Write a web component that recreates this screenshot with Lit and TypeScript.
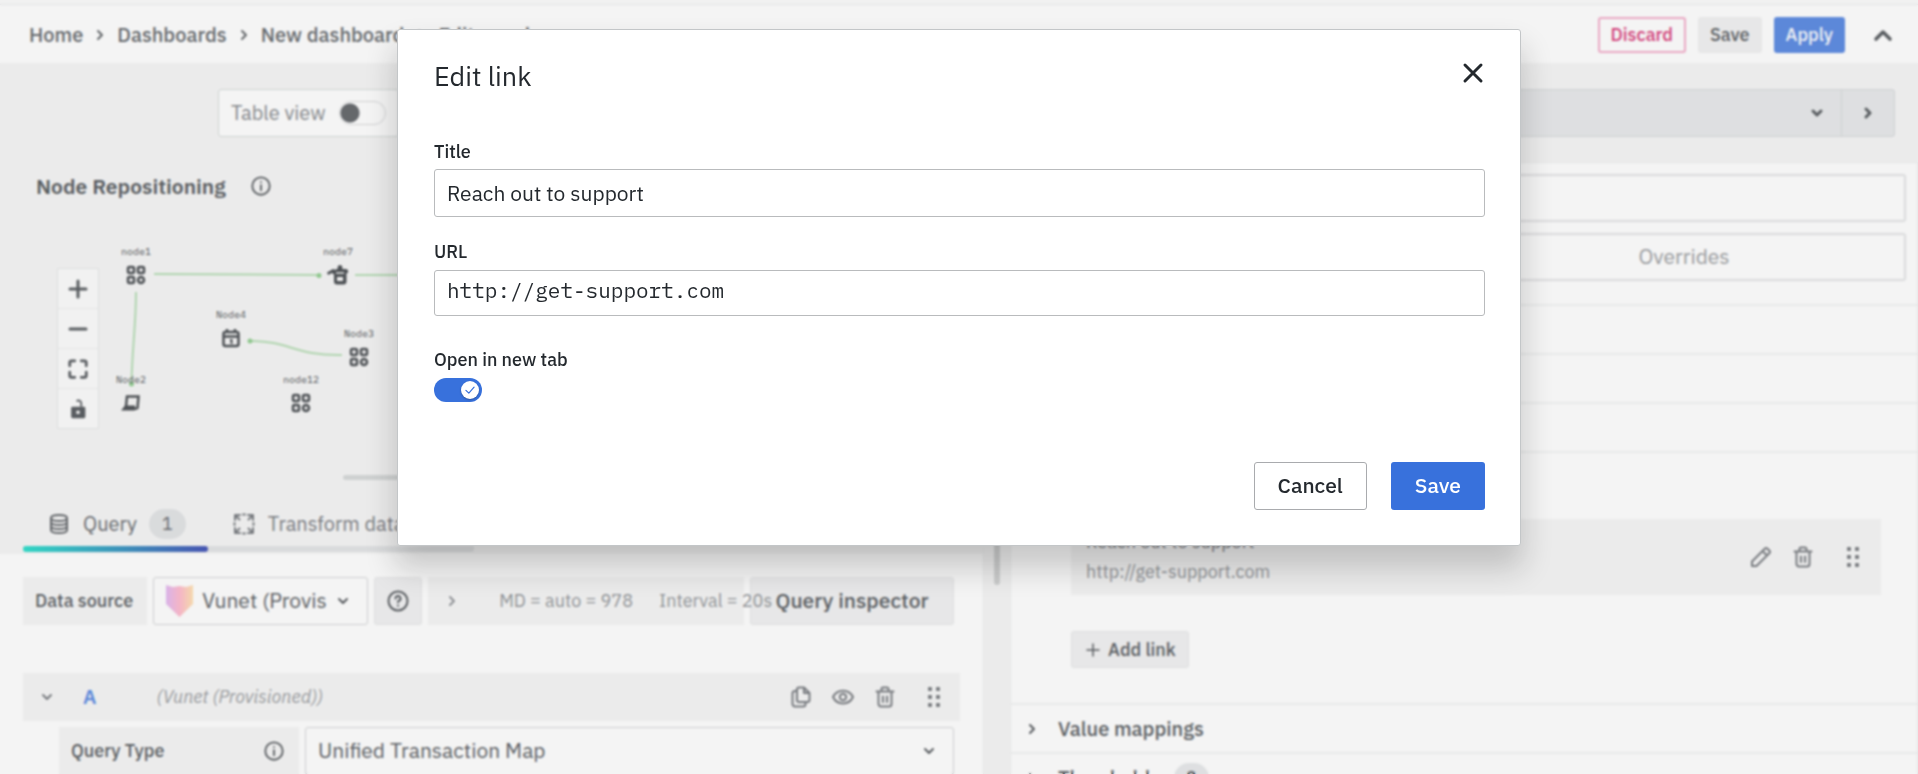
import { LitElement, html, css, svg } from "lit";
import { customElement } from "lit/decorators.js";

const stroke = (d: string, size = 24, width = 2) => html`<svg class="icon" width=${size} height=${size} viewBox="0 0 24 24" fill="none" stroke="currentColor" stroke-width=${width} stroke-linecap="round" stroke-linejoin="round" aria-hidden="true"><path d=${d} /></svg>`;

const ICONS = {
  right: "M10 8l4 4-4 4",
  down: "M8 10l4 4 4-4",
  up: "M6 15.5l6-6 6 6",
  plus: "M12 4v16M4 12h16",
  minus: "M4 12h16",
  close: "M4 4l16 16M20 4L4 20",
  fit: "M3 8.5V5a2 2 0 0 1 2-2h3.5M15.5 3H19a2 2 0 0 1 2 2v3.5M21 15.5V19a2 2 0 0 1-2 2h-3.5M8.5 21H5a2 2 0 0 1-2-2v-3.5",
  info: "M12 2.5a9.5 9.5 0 1 0 0 19a9.5 9.5 0 1 0 0-19M12 11v5.5M12 7.5v.2",
  help: "M12 2.5a9.5 9.5 0 1 0 0 19a9.5 9.5 0 1 0 0-19M9.5 9.5a2.5 2.5 0 1 1 3.6 2.2c-.8.4-1.1.8-1.1 1.6M12 16.5v.2",
  database: "M4 6c0-4 16-4 16 0s-16 4-16 0v12c0 4 16 4 16 0V6M4 10c0 4 16 4 16 0M4 14c0 4 16 4 16 0",
  transform: "M3 8V3h5M3.500 3.500l4 4M16 3h5v5M20.500 3.500l-4 4M21 16v5h-5M20.500 20.500l-4-4M8 21H3v-5M3.500 20.500l4-4M11 2.500h2M2.500 11v2M21.500 11v2M11 21.500h2",
  copy: "M10 2.5h5l5.5 5.5v7a2 2 0 0 1-2 2H10a2 2 0 0 1-2-2V4.5a2 2 0 0 1 2-2M15 2.5v5.5h5.5M8 6H6a2.5 2.5 0 0 0-2.5 2.5v10.500a2.5 2.5 0 0 0 2.5 2.5h8a2.5 2.5 0 0 0 2.5-2.5V17",
  eye: "M2 12C6 3.5 18 3.5 22 12C18 20.5 6 20.5 2 12M12 8.8a3.2 3.2 0 1 0 0 6.4a3.2 3.2 0 1 0 0-6.4",
  trash: "M3.5 6.5h17M8.5 6V4a1.5 1.5 0 0 1 1.5-1.5h4A1.5 1.5 0 0 1 15.5 4v2M5.5 7v12a2.5 2.5 0 0 0 2.5 2.5h8a2.5 2.5 0 0 0 2.5-2.5V7M10 11.5v5.5M14 11.5v5.5",
  pen: "M3 21v-4.5L16 3.5a1.5 1.5 0 0 1 2.2 0l2.3 2.3a1.5 1.5 0 0 1 0 2.2L7.5 21H3M13.5 6l4.5 4.5",
  check: "M5 12.5l5 5 9-10.5",
};

const grip = html`<svg class="icon" width="24" height="24" viewBox="0 0 24 24" fill="currentColor" aria-hidden="true">
  ${[2, 10, 18].map((y) => svg`<rect x="6" y=${y} width="4" height="4" rx="1" /><rect x="14" y=${y} width="4" height="4" rx="1" />`)}</svg>`;

const lock = html`<svg class="icon" width="22" height="22" viewBox="0 0 24 24" aria-hidden="true">
  <path fill="currentColor" fill-rule="evenodd" d="M6 9.5H18.5a1.5 1.5 0 0 1 1.5 1.5v9.5A1.5 1.5 0 0 1 18.5 22H6A1.5 1.5 0 0 1 4.5 20.5V11a1.5 1.5 0 0 1 1.5-1.5M12 13.5a2 2 0 1 0 .01 0z" />
  <path fill="none" stroke="currentColor" stroke-width="2" d="M15.5 9.5V5.5a3 3 0 0 0-5-2" /></svg>`;

const shield = html`<svg class="icon" width="27" height="32" viewBox="0 0 27 32" aria-hidden="true">
  <defs><linearGradient id="vu" x1="0" y1="0" x2="1" y2="0"><stop offset="0" stop-color="#dcaaf0" /><stop offset=".5" stop-color="#ffacc4" /><stop offset="1" stop-color="#ffdba0" /></linearGradient></defs>
  <path fill="url(#vu)" d="M0 0l7 2 6.5-1 6.5 1 7-2v19L13.5 32L0 19z" /></svg>`;

const NODE_GLYPHS: Record<string, unknown> = {
  apps: svg`<g fill="none" stroke="#24292e" stroke-width="2.5"><rect x="-8" y="-8" width="6" height="6" rx="1.5" /><rect x="2" y="-8" width="6" height="6" rx="1.5" /><rect x="-8" y="2" width="6" height="6" rx="1.5" /><circle cx="5" cy="5" r="3" /></g>`,
  calendar: svg`<g fill="none" stroke="#24292e" stroke-width="2.5"><rect x="-7.5" y="-6" width="15" height="14" rx="2" /><path d="M-7.5 -1.5H7.5M-4 -9v4M4 -9v4" /><path stroke-width="2" d="M-1 2h1.5v4" /></g>`,
  bucket: svg`<path fill="#24292e" d="M-11 -2.5l6-3.5 3 1v-1h2a2.5 2.5 0 1 1 4 0h4l2 1v3h-1.500v8.500a3 3 0 0 1-3 3H-1a3 3 0 0 1-3-3v-7l-2-1.5-4 2z" /><path stroke="#f4f4f4" stroke-width="1.5" fill="none" d="M-2 -2H6" /><rect x="-1" y="2" width="6" height="4" fill="#f4f4f4" />`,
  laptop: svg`<path fill="none" stroke="#24292e" stroke-width="2.5" d="M-5 3.5L-4 -6.5H7.5L6.5 5" /><path fill="#24292e" d="M-10 7.500l4-5H4v2h3.500V6L3 7.500z" />`,
};

const NODES = [
  { name: "node1", x: 136, y: 212, glyph: "apps" },
  { name: "node7", x: 338, y: 212, glyph: "bucket" },
  { name: "Node4", x: 231, y: 275, glyph: "calendar" },
  { name: "Node3", x: 359, y: 294, glyph: "apps" },
  { name: "Node2", x: 131, y: 340, glyph: "laptop" },
  { name: "node12", x: 301, y: 340, glyph: "apps" },
];

const base = css`
  * { box-sizing: border-box; }
  button, input, select { font: inherit; color: inherit; margin: 0; }
  button { cursor: pointer; }
  .icon { display: block; flex: none; }
  .bare { display: flex; padding: 0; border: 0; background: none; }
  .btn {
    display: inline-flex; align-items: center; justify-content: center; gap: 6px;
    border: 1px solid transparent; border-radius: 3px; font-weight: 500; white-space: nowrap;
  }
  .primary { background: #3871dc; color: #fff; }
`;

@customElement("top-bar")
export class TopBar extends LitElement {
  static styles = [base, css`
    :host { display: flex; flex: none; align-items: center; justify-content: space-between; height: 64px; padding: 6px 21px 0 29px; background: #fff; border-bottom: 1px solid #f4f4f4; box-shadow: inset 0 4px #fbfbfb, inset 0 5px #e9eaeb; }
    nav { display: flex; align-items: center; gap: 5px; font-size: 20px; font-weight: 500; color: #43484d; }
    a { color: inherit; text-decoration: none; }
    .actions { display: flex; align-items: center; gap: 12px; font-size: 18px; }
    .btn { height: 36px; padding: 0 11px; }
    .danger { background: #fff; color: #d10e5c; border: 2px solid #f19cbf; }
    .grey { background: #eeeeef; }
    .fold { margin-left: 12px; }
  `];
  render() {
    return html`
      <nav aria-label="Breadcrumb">
        <a href="#home">Home</a>${stroke(ICONS.right)}
        <a href="#dashboards">Dashboards</a>${stroke(ICONS.right)}
        <a href="#new">New dashboard</a>${stroke(ICONS.right)}
        <span>Edit panel</span>
      </nav>
      <div class="actions">
        <button class="btn danger">Discard</button>
        <button class="btn grey">Save</button>
        <button class="btn primary">Apply</button>
        <button class="bare fold" aria-label="Collapse">${stroke(ICONS.up, 28, 3)}</button>
      </div>`;
  }
}

@customElement("node-panel")
export class NodePanel extends LitElement {
  static styles = [base, css`
    :host { display: block; flex: none; position: relative; height: 314px; }
    .graph { position: absolute; inset: 0; width: 100%; height: 100%; font: 10px "IBM Plex Mono", "Liberation Mono", monospace; fill: #24292e; }
    header { display: flex; align-items: center; gap: 24px; padding: 12px 13px; }
    h2 { margin: 0; font-size: 21px; line-height: 26px; font-weight: 600; }
    .zoom { position: absolute; left: 34px; top: 107px; width: 42px; display: grid; border: 1px solid #e0e2e2; background: #e9eaea; gap: 1px; }
    .zoom button { display: grid; place-items: center; height: 39px; padding: 0; border: 0; background: #fcfcfc; }
  `];
  render() {
    return html`
      <header><h2>Node Repositioning</h2>${stroke(ICONS.info, 22)}</header>
      <svg class="graph" aria-label="Node map">
        <g transform="translate(-23 -98)">
        <g transform="translate(0 37)" fill="none" stroke="#a6d6a4" stroke-width="2">
          <path d="M154 174L318 175M355 175H560M136 192C136 225 132 250 131.5 284M342 255C295 256 290 241 250 241" />
          <g fill="#7cc47a" stroke="none"><circle cx="319" cy="175.5" r="2.5" /><circle cx="131.5" cy="284" r="2.5" /><circle cx="250" cy="241" r="2.5" /></g>
        </g>
        ${NODES.map((n) => svg`<g transform="translate(${n.x} ${n.y})"><text y="-20" text-anchor="middle">${n.name}</text>${NODE_GLYPHS[n.glyph]}</g>`)}
        </g>
      </svg>
      <div class="zoom">
        <button aria-label="Zoom in">${stroke(ICONS.plus, 24, 3)}</button>
        <button aria-label="Zoom out">${stroke(ICONS.minus, 24, 3)}</button>
        <button aria-label="Fit view">${stroke(ICONS.fit, 22, 3)}</button>
        <button aria-label="Unlock">${lock}</button>
      </div>`;
  }
}

@customElement("query-editor")
export class QueryEditor extends LitElement {
  static styles = [base, css`
    :host { display: flex; flex-direction: column; min-height: 0; }
    .tabs { position: relative; display: flex; flex: none; align-items: center; gap: 34px; height: 50px; margin: 0 23px; padding: 0 24px; width: 451px; border-bottom: 6px solid #dcdee0; border-radius: 0 0 3px 3px; color: #5c6066; }
    .tabs::after { content: ""; position: absolute; left: 0; bottom: -6px; width: 185px; height: 6px; border-radius: 3px; background: linear-gradient(90deg, #00d8c0, #1c2fa8); }
    .tab { display: flex; align-items: center; gap: 12px; padding: 0; border: 0; background: none; font-size: 20px; white-space: nowrap; }
    .tab + .tab { margin-left: 12px; }
    .active { color: #43474c; }
    .count { padding: 0 13px; border-radius: 15px; background: #dcdee0; font-size: 18px; line-height: 30px; }
    .body { flex: 1; margin-top: 2px; padding: 23px 23px 0; background: #fff; }
    .row { display: flex; gap: 6px; padding-right: 6px; }
    .label { display: flex; align-items: center; justify-content: space-between; height: 48px; padding: 0 14px 0 12px; background: #f4f4f4; font-size: 18px; font-weight: 500; white-space: nowrap; }
    .source { display: flex; align-items: center; width: 215px; height: 48px; padding: 0 12px; border: 1px solid #cccdd0; border-radius: 3px; background: #fff; }
    select { flex: 1; min-width: 0; height: 46px; padding: 0; border: 0; appearance: none; background: none; font-size: 21px; }
    .logo { margin-right: 9px; }
    .square { width: 48px; height: 48px; padding: 0; background: #eeeeef; border-color: #e3e4e5; }
    .options { display: flex; align-items: center; gap: 26px; flex: 1; min-width: 0; height: 48px; padding-left: 12px; background: #f4f4f4; font-size: 18px; color: #7a7e83; white-space: nowrap; }
    .options span { position: relative; z-index: 1; }
    .options .first { margin-left: 9px; }
    .inspector { width: 204px; height: 48px; font-size: 21px; background: #eeeeef; border-color: #e3e4e5; }
    .head { display: flex; align-items: center; gap: 18px; height: 48px; margin-top: 48px; padding: 0 14px 0 12px; background: #f4f4f4; font-size: 18px; color: #5c6066; }
    .ref { margin-left: 6px; color: #3871dc; font-size: 20px; font-weight: 600; }
    .name { flex: 1; margin-left: 42px; font-style: italic; color: #85888c; }
    .drag { margin-left: 7px; }
    .type { margin: 6px 0 0 36px; }
    .type .label { width: 240px; }
    .type .source { flex: 1; width: auto; }
  `];
  render() {
    return html`
      <div class="tabs">
        <button class="tab active">${stroke(ICONS.database)}<span>Query</span><span class="count">1</span></button>
        <button class="tab">${stroke(ICONS.transform)}<span>Transform data</span></button>
      </div>
      <div class="body">
        <div class="row">
          <label class="label" for="source">Data source</label>
          <div class="source"><span class="logo">${shield}</span><select id="source"><option>Vunet (Provis</option></select>${stroke(ICONS.down)}</div>
          <button class="btn square" aria-label="Help">${stroke(ICONS.help)}</button>
          <div class="options">${stroke(ICONS.right)}<span class="first">MD = auto = 978</span><span>Interval = 20s</span></div>
          <button class="btn inspector">Query inspector</button>
        </div>
        <div class="head">
          <button class="bare" aria-label="Collapse query">${stroke(ICONS.down)}</button>
          <span class="ref">A</span><span class="name">(Vunet (Provisioned))</span>
          <button class="bare" aria-label="Duplicate">${stroke(ICONS.copy)}</button>
          <button class="bare" aria-label="Hide">${stroke(ICONS.eye)}</button>
          <button class="bare" aria-label="Remove">${stroke(ICONS.trash)}</button>
          <button class="bare drag" aria-label="Move">${grip}</button>
        </div>
        <div class="row type">
          <label class="label" for="type">Query Type ${stroke(ICONS.info, 22)}</label>
          <div class="source"><select id="type"><option>Unified Transaction Map</option></select>${stroke(ICONS.down)}</div>
        </div>
      </div>`;
  }
}

@customElement("options-pane")
export class OptionsPane extends LitElement {
  static styles = [base, css`
    :host { display: flex; flex-direction: column; min-height: 0; }
    .viz { display: flex; flex: none; height: 48px; margin: 25px 23px 25px 0; border: 1px solid #ced1d3; border-radius: 3px; background: #e2e4e6; }
    .viz button { display: flex; align-items: center; justify-content: flex-end; padding: 0 12px; border: 0; background: none; }
    .viz .pick { flex: 1; }
    .viz .next { width: 53px; justify-content: center; border-left: 1px solid #ced1d3; }
    .pane { flex: 1; min-height: 0; background: #fff; border: 1px solid #eceded; border-bottom: 0; }
    .search { display: block; width: calc(100% - 22px); height: 48px; margin: 11px; border: 2px solid #dedfe0; border-radius: 3px; background: #fff; }
    .modes { display: grid; grid-template-columns: 1fr 1fr; height: 48px; margin: 0 11px 23px; border: 2px solid #dedfe0; border-radius: 3px; }
    .modes button { border: 0; background: none; font-size: 21px; color: #85888c; }
    .line { height: 49px; border-top: 2px solid #f0f1f1; }
    .links { border-top: 2px solid #f0f1f1; padding: 66px 36px 36px 60px; height: 252px; }
    .card { display: flex; align-items: center; gap: 18px; height: 76px; padding: 0 16px 0 15px; background: #f4f4f4; font-size: 18px; line-height: 30px; color: #5c6066; }
    .text { flex: 1; }
    .muted { color: #7a7e83; }
    .drag { margin-left: 8px; }
    .add { height: 37px; margin-top: 36px; padding: 0 12px; background: #eeeeef; border-color: #e3e4e5; font-size: 18px; }
    .section { display: flex; align-items: center; gap: 14px; height: 49px; padding-left: 9px; border-top: 2px solid #f0f1f1; font-size: 20px; font-weight: 500; }
    .count { padding: 0 12px; border-radius: 15px; background: #e2e4e6; font-size: 18px; line-height: 30px; }
  `];
  render() {
    return html`
      <div class="viz">
        <button class="pick" aria-label="Visualization">${stroke(ICONS.down, 24, 3)}</button>
        <button class="next" aria-label="Next">${stroke(ICONS.right, 24, 3)}</button>
      </div>
      <div class="pane">
        <input class="search" aria-label="Search options" />
        <div class="modes"><button>All</button><button>Overrides</button></div>
        <div class="line"></div><div class="line"></div><div class="line"></div>
        <div class="links">
          <div class="card">
            <div class="text"><div>Reach out to support</div><div class="muted">http://get-support.com</div></div>
            <button class="bare" aria-label="Edit link">${stroke(ICONS.pen)}</button>
            <button class="bare" aria-label="Remove link">${stroke(ICONS.trash)}</button>
            <button class="bare drag" aria-label="Move link">${grip}</button>
          </div>
          <button class="btn add">${stroke(ICONS.plus, 18)}Add link</button>
        </div>
        <div class="section">${stroke(ICONS.right)}<span>Value mappings</span></div>
        <div class="section">${stroke(ICONS.right)}<span>Thresholds</span><span class="count">2</span></div>
      </div>`;
  }
}

@customElement("link-dialog")
export class LinkDialog extends LitElement {
  static styles = [base, css`
    :host { display: block; width: min(1124px, 90%); padding: 24px 35px 35px 36px; background: #fff; border: 1px solid #c3c6c8; border-radius: 3px; box-shadow: 0 20px 30px 2px rgba(24, 26, 27, 0.2); color: #24292e; }
    header { display: flex; align-items: flex-start; justify-content: space-between; height: 87px; }
    h1 { margin: 0; padding-top: 4px; font-size: 27px; line-height: 36px; font-weight: 400; }
    .close { margin: 7px 0 0; }
    form { display: flex; flex-direction: column; }
    label { font-size: 18px; line-height: 22px; font-weight: 500; }
    .text { width: 100%; height: 48px; margin: 6px 0 24px; padding: 0 12px; border: 1px solid #b9bbbd; border-radius: 3px; background: #fff; font-size: 21px; }
    .mono { height: 46px; padding-bottom: 6px; margin: 7px 0 33px; font-family: "IBM Plex Mono", "Liberation Mono", monospace; }
    .switch { display: flex; position: relative; align-self: flex-start; margin-top: 7px; }
    .switch input { width: 48px; height: 24px; appearance: none; border-radius: 12px; background: #3871dc; }
    .knob { position: absolute; right: 3px; top: 3px; display: grid; place-items: center; width: 18px; height: 18px; border-radius: 50%; background: #fff; color: #3871dc; pointer-events: none; box-shadow: 0 1px 2px rgba(24, 26, 27, 0.3); }
    footer { display: flex; justify-content: flex-end; gap: 24px; margin-top: 60px; }
    footer .btn { height: 48px; padding: 0 23px; font-size: 21px; }
    .outline { background: #fff; border-color: #a9abae; }
  `];
  render() {
    return html`
      <header><h1>Edit link</h1><button class="bare close" aria-label="Close">${stroke(ICONS.close, 24, 3)}</button></header>
      <form @submit=${(e: Event) => e.preventDefault()}>
        <label for="title">Title</label>
        <input class="text" id="title" .value=${"Reach out to support"} />
        <label for="url">URL</label>
        <input class="text mono" id="url" .value=${"http://get-support.com"} />
        <label for="tab">Open in new tab</label>
        <div class="switch"><input id="tab" type="checkbox" checked /><span class="knob">${stroke(ICONS.check, 14)}</span></div>
        <footer><button class="btn outline" type="button">Cancel</button><button class="btn primary">Save</button></footer>
      </form>`;
  }
}

@customElement("app-root")
export class AppRoot extends LitElement {
  static styles = [base, css`
    :host { display: flex; flex-direction: column; position: relative; height: 100vh; overflow: hidden; background: #f4f4f4; color: #34393e; font-family: "IBM Plex Sans", Roboto, sans-serif; font-size: 21px; line-height: 1.2; }
    .work { flex: 1; min-height: 0; isolation: isolate; display: grid; grid-template-columns: minmax(0, 983fr) 27px minmax(0, 908fr); grid-template-rows: minmax(0, 1fr); }
    .left { display: flex; flex-direction: column; min-height: 0; }
    .toolbar { display: flex; flex: none; padding: 25px 0 24px 218px; }
    .view { display: flex; align-items: center; gap: 13px; height: 48px; padding: 0 12px; border: 1px solid #ccd3d1; border-radius: 3px; background: #fff; color: #6b6f74; font-size: 20px; }
    .view input { width: 47px; height: 24px; margin: 0; appearance: none; border: 1px solid #cfd1d3; border-radius: 12px; background: radial-gradient(circle at 10px 11px, #43474c 9px, transparent 10px); }
    .panel { margin: 0 23px; }
    .handle { flex: none; height: 5px; margin: 0 auto; width: 297px; border-radius: 3px; background: #ced1d1; }
    .grow { flex: 1; margin-top: 22px; }
    .split { display: flex; align-items: center; justify-content: center; border-left: 1px solid #eceded; }
    .split span { width: 6px; height: 332px; border-radius: 3px; background: #c8caca; }
    .veil { position: absolute; inset: 0; background: rgba(208, 209, 211, 0.24); backdrop-filter: blur(1px); }
    .stage { position: absolute; inset: 0; display: flex; justify-content: center; align-items: flex-start; padding-top: 29px; }
  `];
  render() {
    return html`
      <top-bar></top-bar>
      <div class="work">
        <div class="left">
          <div class="toolbar"><label class="view">Table view<input type="checkbox" /></label></div>
          <node-panel class="panel"></node-panel>
          <div class="handle"></div>
          <query-editor class="grow"></query-editor>
        </div>
        <div class="split"><span></span></div>
        <options-pane></options-pane>
      </div>
      <div class="veil"></div>
      <div class="stage"><link-dialog role="dialog" aria-label="Edit link"></link-dialog></div>`;
  }
}
